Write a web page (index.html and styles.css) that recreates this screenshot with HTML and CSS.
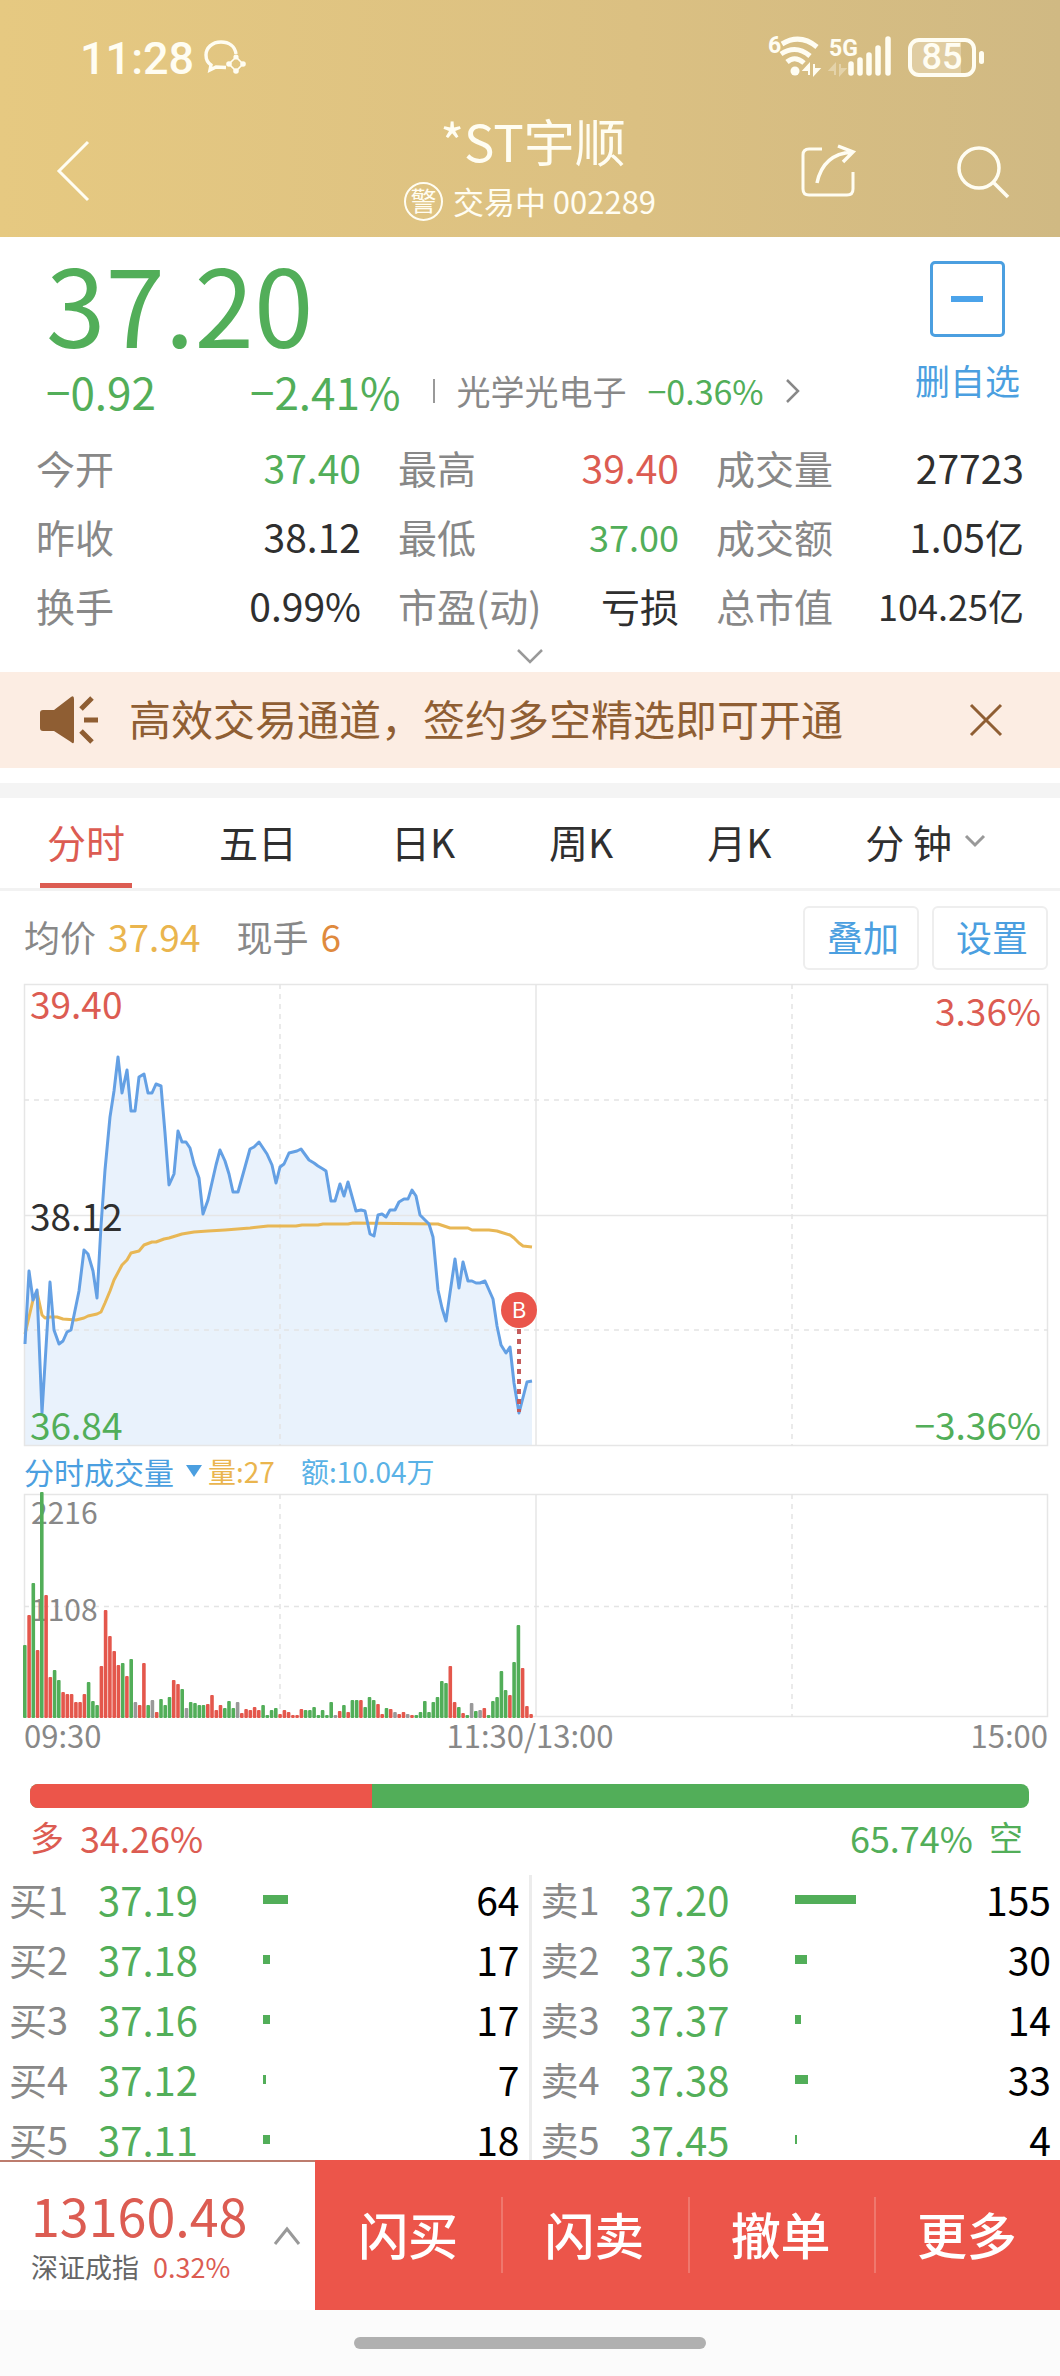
FILE: index.html
```html
<!DOCTYPE html>
<html lang="zh-CN">
<head>
<meta charset="utf-8">
<meta name="viewport" content="width=device-width, initial-scale=1">
<title>*ST宇顺 002289</title>
<link rel="stylesheet" href="styles.css">
</head>
<body>
<div class="app">
  <header class="header">
    <div class="status">
      <div class="status-left">
        <span class="clock">11:28</span>
        <svg class="icon" width="42" height="36" viewBox="0 0 42 36" fill="none" stroke="currentColor" stroke-width="3.4">
          <path d="M32 15C31 7 25 3 17 3C8 3 2 9 2 16C2 21 4 24 7 26L6 31L12 28L22 28.500"/>
          <path d="M32 18L25 25L32 32L39 25Z" stroke-width="1.600"/>
          <g fill="currentColor" stroke="none"><circle cx="32" cy="18" r="2.600"/><circle cx="25" cy="25" r="2.800"/><circle cx="32" cy="32" r="2.800"/><circle cx="39" cy="25" r="2.800"/></g>
        </svg>
      </div>
      <div class="status-right">
        <svg class="icon" width="126" height="42" viewBox="0 0 126 42" fill="none" stroke="currentColor">
          <text class="tiny" x="0" y="17">6</text>
          <g stroke-width="5">
            <path d="M14 8Q32 -3 49 11"/>
            <path d="M13 18Q28 8 42 20" />
            <path d="M19 26Q27 19 36 27"/>
          </g>
          <circle cx="27" cy="35" r="4.500" fill="currentColor" stroke="none"/>
          <path d="M36 34H41V28.500ZM41 28V39M46 28V39M46 33H51L46 38.500Z" fill="currentColor" stroke-width="2"/>
          <path d="M62 34H67V28.500ZM67 28V39M72 28V39M72 33H77L72 38.500Z" fill="currentColor" stroke-width="2" opacity=".35"/>
          <text class="tiny" x="61" y="20">5G</text>
          <path d="M83 28V37M92 24V37M101 19V37M110 12V37M120 3V37" stroke-width="5.500" stroke-linecap="round"/>
        </svg>
        <span class="battery"><span class="battery-text">85</span></span>
      </div>
    </div>
    <nav class="nav">
      <button class="icon-button" aria-label="返回">
        <svg class="icon" width="34" height="62" viewBox="0 0 34 62" fill="none" stroke="currentColor" stroke-width="3"><path d="M32 2L3 31L32 60"/></svg>
      </button>
      <div class="title">
        <h1 class="stock-name">*ST宇顺</h1>
        <p class="stock-meta"><span class="alert">警</span><span>交易中 002289</span></p>
      </div>
      <div class="nav-actions">
        <button class="icon-button" aria-label="分享">
          <svg class="icon" width="56" height="56" viewBox="0 0 56 56" fill="none" stroke="currentColor" stroke-width="3">
            <path d="M22 6H9Q3 6 3 12V46Q3 52 9 52H47Q53 52 53 46V29"/>
            <path d="M17 40Q23 11 52 9M38 3L53 9L43 19" stroke-width="3.500"/>
          </svg>
        </button>
        <button class="icon-button" aria-label="搜索">
          <svg class="icon" width="54" height="56" viewBox="0 0 54 56" fill="none" stroke="currentColor" stroke-width="3.500"><circle cx="23" cy="25" r="20"/><path d="M37 39L52 54"/></svg>
        </button>
      </div>
    </nav>
  </header>

  <main class="content">
    <section class="quote">
      <div class="quote-top">
        <div>
          <p class="price">37.20</p>
          <div class="change">
            <span class="change-value">−0.92</span>
            <span>−2.41%</span>
            <a class="sector" href="#sector">
              <span>光学光电子</span><span class="down">−0.36%</span>
              <svg width="16" height="24" viewBox="0 0 16 24" fill="none" stroke="currentColor" stroke-width="2.500"><path d="M2 1L13 12L2 23"/></svg>
            </a>
          </div>
        </div>
        <button class="favorite"><span class="favorite-box"></span>删自选</button>
      </div>
      <dl class="stats">
        <div class="stat"><dt>今开</dt><dd class="down">37.40</dd></div>
        <div class="stat"><dt>最高</dt><dd class="up">39.40</dd></div>
        <div class="stat"><dt>成交量</dt><dd>27723</dd></div>
        <div class="stat"><dt>昨收</dt><dd>38.12</dd></div>
        <div class="stat"><dt>最低</dt><dd class="down compact">37.00</dd></div>
        <div class="stat"><dt>成交额</dt><dd>1.05亿</dd></div>
        <div class="stat"><dt>换手</dt><dd>0.99%</dd></div>
        <div class="stat"><dt>市盈(动)</dt><dd>亏损</dd></div>
        <div class="stat"><dt>总市值</dt><dd class="compact">104.25亿</dd></div>
      </dl>
      <button class="expand" aria-label="展开">
        <svg width="28" height="16" viewBox="0 0 28 16" fill="none" stroke="currentColor" stroke-width="2.500"><path d="M2 2L14 14L26 2"/></svg>
      </button>
    </section>

    <section class="banner">
      <svg width="60" height="50" viewBox="0 0 60 50" fill="currentColor"><path d="M3 15H14L31 2Q34 0 34 4V46Q34 50 31 47L14 36H3Q0 36 0 33V18Q0 15 3 15Z"/><path d="M41 14L52 3M44 25H58M41 36L52 47" stroke="currentColor" stroke-width="5"/></svg>
      <a class="banner-text" href="#signup">高效交易通道，签约多空精选即可开通</a>
      <button class="icon-button" aria-label="关闭">
        <svg class="icon" width="32" height="34" viewBox="0 0 32 34" fill="none" stroke="currentColor" stroke-width="3"><path d="M1 2L31 32M31 2L1 32"/></svg>
      </button>
    </section>

    <div class="tabs" role="tablist">
      <button class="tab active" role="tab" aria-selected="true">分时</button>
      <button class="tab" role="tab">五日</button>
      <button class="tab" role="tab">日K</button>
      <button class="tab" role="tab">周K</button>
      <button class="tab" role="tab">月K</button>
      <button class="tab" role="tab">分 钟
        <svg width="22" height="14" viewBox="0 0 22 14" fill="none" stroke="#999" stroke-width="3"><path d="M2 2L11 11L20 2"/></svg>
      </button>
    </div>

    <div class="toolbar">
      <span>均价</span><span class="avg">37.94</span>
      <span class="lot-label">现手</span><span class="lot">6</span>
      <div class="tools"><button class="tool">叠加</button><button class="tool">设置</button></div>
    </div>

    <section class="charts">
      <svg class="chart" viewBox="0 0 1024 462" role="img" aria-label="分时走势">
        <path id="area" class="area"/>
        <path class="grid-solid" d="M.5 .5H1023.500V461.500H.5ZM0 231.500H1024M512 0V462"/>
        <path class="grid-dash" d="M0 116H1024M0 346H1024M256 0V462M768 0V462"/>
        <polyline class="avg-line" points="1,350 9,316 13,308 18,331 21,334 26,333 33,333 39,335 52,336 60,334 64,332 73,330 77,328 81,319 86,307 90,296 98,281 103,276 107,269 115,267 120,261 128,258 132,258 140,255 145,254 158,250 170,248 184,247 201,246 226,244 244,242 272,242 278,241 294,241 299,240 324,240 329,239 414,240 426,244 444,244 448,246 465,246 473,247 486,251 490,254 495,259 499,262 508,263"/>
        <polyline id="price-line" class="price-line" points="1,360 5,287 9,316 13,306 18,429 26,298 30,346 35,360 39,357 43,348 47,346 55,307 60,266 64,270 69,287 73,314 77,242 81,186 86,133 90,107 94,73 98,109 103,86 107,127 111,127 115,93 120,90 124,109 128,109 132,100 137,102 141,149 145,201 150,190 154,147 158,158 162,158 166,164 170,180 175,194 179,230 184,216 192,181 196,166 201,177 205,190 209,208 214,208 221,183 226,165 230,163 235,158 239,164 243,170 248,181 252,199 256,183 260,180 265,169 269,168 273,167 277,165 285,176 290,179 294,182 299,185 302,187 307,217 311,217 316,200 320,212 324,198 329,216 332,227 337,226 341,227 346,250 350,252 354,231 358,230 362,233 366,226 371,226 375,218 380,215 384,215 388,206 392,212 396,231 405,240 409,253 414,306 418,324 422,337 426,309 431,275 435,304 439,278 444,297 448,297 452,299 456,299 461,297 469,315 473,342 477,361 482,369 486,363 490,399 495,429 503,398 508,397"/>
        <path class="marker-line" d="M495 345V428"/>
        <circle class="marker" cx="495" cy="326" r="18"/>
        <text class="marker-text" x="495" y="334" text-anchor="middle">B</text>
        <g class="scale">
          <text class="up" x="6" y="35">39.40</text>
          <text x="6" y="247">38.12</text>
          <text class="down" x="6" y="456">36.84</text>
          <text class="up" x="1017" y="42" text-anchor="end">3.36%</text>
          <text class="down" x="1017" y="456" text-anchor="end">−3.36%</text>
        </g>
      </svg>
      <div class="volume-head">
        <button class="volume-type">分时成交量<svg width="16" height="12" viewBox="0 0 16 12" fill="currentColor"><path d="M0 0H16L8 12Z"/></svg></button>
        <span class="avg">量:27</span><span class="amount">额:10.04万</span>
      </div>
      <svg class="chart" viewBox="0 0 1024 223" role="img" aria-label="成交量">
        <path class="grid-solid" d="M.5 .5H1023.500V222.500H.5ZM512 0V223"/>
        <path class="grid-dash" d="M0 112.500H1024M256 0V223M768 0V223"/>
        <g class="volume-scale"><text x="7" y="30">2216</text><text x="7" y="127">1108</text></g>
        <g id="bars"></g>
      </svg>
      <div class="axis"><span>09:30</span><span class="axis-noon">11:30/13:00</span><span>15:00</span></div>
    </section>

    <section class="ratio">
      <div class="ratio-bar"><div class="ratio-long" style="width:34.26%"></div></div>
      <div class="ratio-text">
        <div class="ratio-side up"><span class="side">多</span><span>34.26%</span></div>
        <div class="ratio-side down"><span>65.74%</span><span class="side">空</span></div>
      </div>
    </section>

    <section class="book">
      <table class="orders">
        <tr><th scope="row">买1</th><td class="down">37.19</td><td><div class="depth" style="width:25px"></div></td><td class="qty">64</td></tr>
        <tr><th scope="row">买2</th><td class="down">37.18</td><td><div class="depth" style="width:7px"></div></td><td class="qty">17</td></tr>
        <tr><th scope="row">买3</th><td class="down">37.16</td><td><div class="depth" style="width:7px"></div></td><td class="qty">17</td></tr>
        <tr><th scope="row">买4</th><td class="down">37.12</td><td><div class="depth" style="width:3px"></div></td><td class="qty">7</td></tr>
        <tr><th scope="row">买5</th><td class="down">37.11</td><td><div class="depth" style="width:7px"></div></td><td class="qty">18</td></tr>
      </table>
      <div class="book-divider"></div>
      <table class="orders">
        <tr><th scope="row">卖1</th><td class="down">37.20</td><td><div class="depth" style="width:61px"></div></td><td class="qty">155</td></tr>
        <tr><th scope="row">卖2</th><td class="down">37.36</td><td><div class="depth" style="width:12px"></div></td><td class="qty">30</td></tr>
        <tr><th scope="row">卖3</th><td class="down">37.37</td><td><div class="depth" style="width:6px"></div></td><td class="qty">14</td></tr>
        <tr><th scope="row">卖4</th><td class="down">37.38</td><td><div class="depth" style="width:13px"></div></td><td class="qty">33</td></tr>
        <tr><th scope="row">卖5</th><td class="down">37.45</td><td><div class="depth" style="width:2px"></div></td><td class="qty">4</td></tr>
      </table>
    </section>
  </main>

  <footer class="footer">
    <div class="trade">
      <button class="index">
        <span class="index-info"><span class="index-value">13160.48</span><span class="index-meta"><span>深证成指</span><span class="up">0.32%</span></span></span>
        <svg width="28" height="20" viewBox="0 0 28 20" fill="none" stroke="#999" stroke-width="3"><path d="M2 18L14 3L26 18"/></svg>
      </button>
      <button class="action">闪买</button>
      <button class="action">闪卖</button>
      <button class="action">撤单</button>
      <button class="action">更多</button>
    </div>
    <div class="home"><div class="home-pill"></div></div>
  </footer>
</div>
<script src="chart.js"></script>
</body>
</html>
```
FILE: styles.css
```css
* { box-sizing: border-box; }
body, h1, p, dl, dd { margin: 0; }
body {
  font-family: "Noto Sans CJK SC", "Noto Sans", sans-serif;
  font-size: 38px;
  color: #2f2f2f;
  background: #fff;
}
button {
  font: inherit;
  color: inherit;
  background: none;
  border: 0;
  padding: 0;
}
a { color: inherit; text-decoration: none; }
h1 { font-weight: 400; }
svg { display: block; flex: none; overflow: visible; }
.up { color: #dc5c52; fill: #dc5c52; }
.down { color: #52ae59; fill: #52ae59; }

.app { display: flex; flex-direction: column; height: 100vh; }
.content { flex: 1; min-height: 0; overflow-y: auto; scrollbar-width: none; }

.header { color: #fffdf2; background: linear-gradient(90deg, #e6c981, #dbc082 60%, #d0b983); }
.status {
  display: flex;
  justify-content: space-between;
  align-items: center;
  height: 114px;
  padding: 0 76px 0 80px;
  font-family: Roboto, sans-serif;
}
.status-left { display: flex; align-items: center; gap: 10px; }
.status-right { display: flex; align-items: center; gap: 14px; }
.clock { font-size: 45px; line-height: 56px; padding-top: 3px; font-weight: 500; }
.tiny { font-size: 23px; font-weight: 700; fill: currentColor; stroke: none; }
.battery {
  position: relative;
  display: flex;
  align-items: center;
  justify-content: center;
  width: 68px;
  height: 39px;
  margin-right: 8px;
  border: 4px solid currentColor;
  border-radius: 11px;
  background: linear-gradient(90deg, #e0cda2 82%, transparent 82%);
}
.battery::after {
  content: "";
  position: absolute;
  right: -12px;
  top: 9px;
  width: 5px;
  height: 13px;
  border-radius: 3px;
  background: currentColor;
}
.battery-text { font-size: 36px; line-height: 36px; font-weight: 500; }

.nav {
  display: grid;
  grid-template-columns: 1fr auto 1fr;
  align-items: center;
  min-height: 123px;
  padding: 0 50px 9px 56px;
}
.icon-button { justify-self: start; }
.title { align-self: start; text-align: center; }
.stock-name { font-size: 51px; line-height: 52px; }
.stock-meta {
  display: flex;
  align-items: center;
  gap: 10px;
  margin-top: 15px;
  padding-right: 6px;
  font-size: 31px;
  line-height: 40px;
}
.alert {
  width: 39px;
  height: 39px;
  border: 2px solid currentColor;
  border-radius: 50%;
  font-size: 26px;
  line-height: 32px;
}
.nav-actions { display: flex; justify-content: flex-end; gap: 100px; }

.quote { padding: 10px 36px 0; }
.quote-top { display: flex; justify-content: space-between; padding-left: 10px; }
.price { font-size: 107px; line-height: 110px; color: #52ae59; }
.change {
  display: flex;
  align-items: center;
  margin-top: 9px;
  font-size: 44px;
  line-height: 50px;
  color: #52ae59;
}
.change-value { width: 204px; }
.sector {
  display: flex;
  align-items: center;
  gap: 21px;
  margin-left: 33px;
  font-size: 34px;
  color: #888;
}
.sector::before { content: ""; width: 2px; height: 24px; background: #999; }
.favorite {
  display: flex;
  flex-direction: column;
  align-items: center;
  align-self: start;
  gap: 21px;
  padding: 14px 4px 0 0;
  font-size: 35px;
  line-height: 44px;
  color: #4b9fe0;
}
.favorite-box {
  display: flex;
  align-items: center;
  justify-content: center;
  width: 75px;
  height: 76px;
  border: 3px solid #4b9fe0;
  border-radius: 5px;
}
.favorite-box::before { content: ""; width: 32px; height: 6px; background: #4ba3ea; }
.stats {
  display: grid;
  grid-template-columns: 325fr 281fr 308fr;
  column-gap: 37px;
  margin-top: 16px;
}
.stat {
  display: flex;
  justify-content: space-between;
  align-items: center;
  height: 69px;
  font-size: 39px;
  white-space: nowrap;
}
dt { color: #888; }
.compact { font-size: 36px; }
.expand {
  display: flex;
  justify-content: center;
  align-items: center;
  width: 100%;
  height: 33px;
  color: #999;
}

.banner {
  display: flex;
  align-items: center;
  gap: 29px;
  height: 96px;
  padding: 0 58px 0 40px;
  font-size: 42px;
  color: #8f5e33;
  background: #fcede3;
}
.banner-text { flex: 1; line-height: 56px; padding-bottom: 4px; }

.tabs {
  display: flex;
  justify-content: space-between;
  margin-top: 15px;
  padding: 0 74px 0 40px;
  border-top: 15px solid #f4f4f4;
  border-bottom: 3px solid #f2f2f2;
}
.tab {
  display: flex;
  align-items: center;
  gap: 12px;
  height: 90px;
  border-bottom: 5px solid transparent;
  font-size: 39px;
}
.active { margin-right: -7px; padding: 0 7px; color: #dc5c52; border-color: #dc5c52; }

.toolbar {
  display: flex;
  align-items: center;
  height: 93px;
  padding: 0 12px 0 24px;
  font-size: 36px;
  line-height: 52px;
  color: #888;
}
.toolbar > span { padding-bottom: 3px; }
.avg { color: #eab54e; }
.toolbar .avg { margin-left: 12px; font-size: 37px; }
.lot-label { margin-left: 36px; }
.lot { margin-left: 12px; font-size: 37px; color: #df8a3e; }
.tools { display: flex; gap: 13px; margin-left: auto; }
.tool {
  width: 116px;
  height: 64px;
  padding: 0 0 4px 4px;
  border: 2px solid #eee;
  border-radius: 6px;
  font-size: 36px;
  line-height: 52px;
  color: #4b9fe0;
}

.charts { padding: 0 12px 0 24px; }
.chart { width: 100%; }
.chart path, .chart polyline { fill: none; }
.grid-solid { stroke: #e6e6e6; stroke-width: 1.5; }
.grid-dash { stroke: #e4e4e4; stroke-width: 1.5; stroke-dasharray: 5 5; }
.chart .area { fill: #e9f2fc; }
.avg-line { stroke: #e8b755; stroke-width: 3; stroke-linejoin: round; }
.price-line { stroke: #64a0e4; stroke-width: 3; stroke-linejoin: round; }
.marker-line { stroke: #c45c5c; stroke-width: 4; stroke-dasharray: 5 5; }
.marker { fill: #ea554b; }
.marker-text { font-size: 22px; fill: #fff; }
.scale { font-size: 37px; fill: #2f2f2f; }
.volume-scale { font-size: 30px; fill: #888; }
.bar-up { fill: #e4574c; }
.bar-down { fill: #52ae59; }
.bar-flat { fill: #999; }
.volume-head {
  display: flex;
  align-items: center;
  height: 48px;
  padding-top: 2px;
  font-size: 28px;
  color: #5ab2e6;
}
.volume-type {
  display: flex;
  align-items: center;
  gap: 12px;
  margin-right: 6px;
  font-size: 30px;
  line-height: 44px;
  color: #4b9fe0;
}
.amount { margin-left: 26px; }
.axis {
  display: grid;
  grid-template-columns: 1fr auto 1fr;
  font-size: 31px;
  line-height: 36px;
  color: #888;
}
.axis-noon { padding-right: 12px; }
.axis span:last-child { text-align: right; }

.ratio { padding: 31px 31px 0 30px; }
.ratio-bar {
  height: 24px;
  border-radius: 8px;
  overflow: hidden;
  background: #52ae59;
}
.ratio-long { height: 100%; background: #ec554a; }
.ratio-text {
  display: flex;
  justify-content: space-between;
  margin-top: 9px;
  padding-right: 6px;
  font-size: 36px;
  line-height: 40px;
}
.ratio-side { display: flex; gap: 16px; }
.side { font-size: 34px; }

.book { display: flex; margin-top: 12px; }
.book-divider { width: 3px; margin-top: 6px; background: #ececec; }
.orders {
  flex: 1;
  table-layout: fixed;
  width: 0;
  border-collapse: collapse;
}
.orders tr { height: 60px; }
.orders th, .orders td { padding: 0; line-height: 56px; text-align: left; font-weight: 400; }
.orders th { width: 98px; padding-left: 9px; color: #888; }
.orders td:nth-child(2) { width: 165px; font-size: 40px; }
.orders .qty { padding-right: 9px; font-size: 39px; text-align: right; color: #000; }
.depth { height: 9px; background: #52ae59; }

.footer { flex: none; }
.trade { display: flex; height: 150px; color: #fff; background: #ec554a; }
.index {
  display: flex;
  align-items: center;
  justify-content: space-between;
  width: 315px;
  padding: 0 14px 0 31px;
  border-top: 2px solid #bd7c6d;
  background: #fff;
  text-align: left;
}
.index-info { display: flex; flex-direction: column; gap: 2px; }
.index-value { font-size: 52px; line-height: 60px; color: #dc5c52; }
.index-meta { display: flex; gap: 14px; font-size: 27px; line-height: 40px; color: #666; }
.action {
  position: relative;
  flex: 1;
  padding-bottom: 4px;
  font-size: 50px;
  font-weight: 500;
}
.action + .action::before {
  content: "";
  position: absolute;
  left: 0;
  top: 37px;
  width: 2px;
  height: 76px;
  background: #ef776d;
}
.home { display: flex; justify-content: center; height: 66px; padding-top: 27px; background: #fbfbfb; }
.home-pill { width: 33.3%; height: 12px; border-radius: 6px; background: #b0b0b0; }
```
FILE: chart.js
```js
// One entry per minute from 09:30: direction (u up, d down, f flat) and bar height.
const volumes = "d73 u103 d135 u68 d226 u123 u41 d48 d38 u26 u24 u24 u16 u16 u24 d36 d17 d13 u52 u108 u82 u67 u53 d55 u42 d59 f16 u13 u55 d13 f18 u6 d19 d13 d21 u38 u34 d29 f10 d16 d15 d13 d13 u14 u23 u8 u13 d10 d17 d10 f16 u5 u9 u8 u11 u8 d13 d3 d8 d10 u4 u8 u6 u3 u3 u9 d8 d8 d11 d3 d8 d3 d16 f3 u7 d13 u6 d18 d18 u18 d11 d21 d18 u14 u4 d10 u9 f6 u4 u6 f4 u3 d3 d6 d17 d6 d16 d21 d37 d35 u52 u16 d11 u5 d3 f15 d7 f8 u10 d3 d17 d21 d47 d28 u23 d56 d93 u50 u12 u4";
const kinds = { u: "bar-up", d: "bar-down", f: "bar-flat" };
const bars = document.getElementById("bars");

volumes.split(" ").forEach((entry, minute) => {
  const height = Number(entry.slice(1));
  const rect = document.createElementNS("http://www.w3.org/2000/svg", "rect");
  rect.setAttribute("class", kinds[entry[0]]);
  rect.setAttribute("x", (minute * 4.255 - 1).toFixed(1));
  rect.setAttribute("y", 224 - height);
  rect.setAttribute("width", 3.6);
  rect.setAttribute("height", height);
  rect.setAttribute("rx", 1);
  bars.append(rect);
});

// The shaded area follows the price line down to the bottom of the chart.
const points = document.getElementById("price-line").getAttribute("points");
document.getElementById("area").setAttribute("d", `M1,462 L${points} L508,462Z`);
```
